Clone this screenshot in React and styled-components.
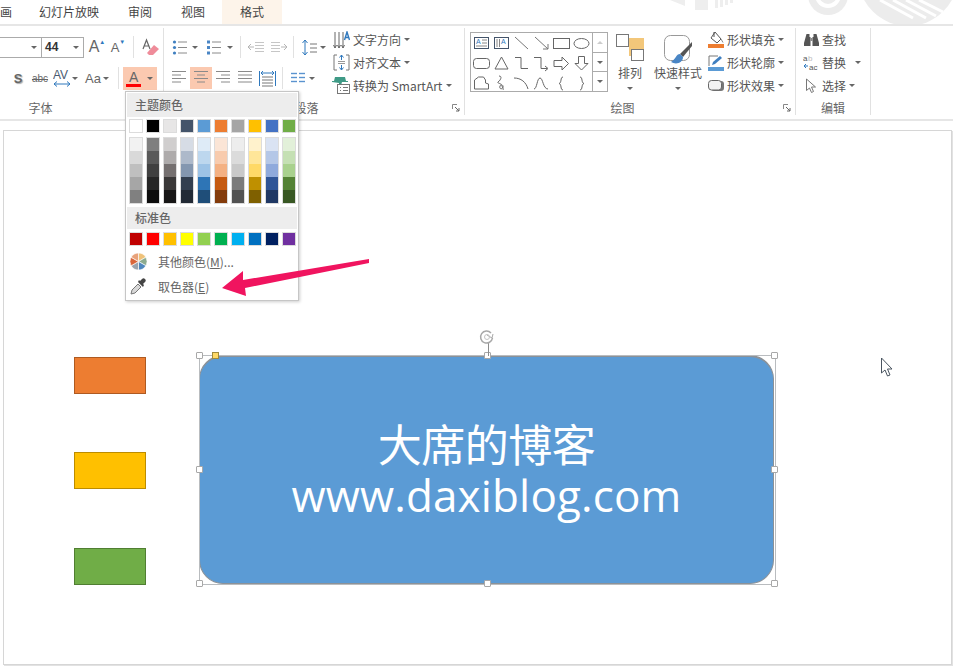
import React from "react";
import styled, { createGlobalStyle } from "styled-components";

const Reset = createGlobalStyle`
  html, body { margin: 0; padding: 0; background: #fff; }
  * { box-sizing: border-box; }
`;

const cjk = `"Noto Sans CJK SC", "Noto Sans", sans-serif`;

const Page = styled.div`
  position: relative;
  width: 953px;
  height: 667px;
  overflow: hidden;
  background: #fff;
  font-family: ${cjk};
  color: #444;
`;

/* ---------- tabs ---------- */
const TabBar = styled.div`
  position: relative;
  display: flex;
  height: 26px;
  border-bottom: 2px solid #e6e6e6;
  overflow: hidden;
`;

const Tab = styled.div`
  position: relative;
  z-index: 1;
  flex: none;
  width: ${(p) => p.$w}px;
  margin-left: ${(p) => p.$ml || 0}px;
  height: 24px;
  line-height: 24px;
  font-size: 12px;
  text-align: ${(p) => p.$align || "center"};
  background: ${(p) => (p.$active ? "#fdf4ea" : "transparent")};
  white-space: nowrap;
`;

const Watermark = styled.svg`
  position: absolute;
  top: 0;
  left: 660px;
`;

/* ---------- ribbon ---------- */
const Ribbon = styled.div`
  display: flex;
  height: 95px;
  padding: 2px 0 4px;
  border-bottom: 2px solid #e6e6e6;
`;

const Group = styled.section`
  flex: none;
  display: flex;
  flex-direction: column;
  width: ${(p) => p.$w}px;
  border-right: 1px solid #e1e1e1;
`;

const GroupBody = styled.div`
  flex: 1;
  display: flex;
  min-height: 0;
`;

const GroupFoot = styled.div`
  flex: none;
  display: flex;
  align-items: center;
  height: 16px;
  padding-right: ${(p) => p.$pr || 0}px;
  font-size: 12px;
  color: #666;
`;

const FootLabel = styled.span`
  flex: 1;
  text-align: center;
`;

const Launcher = styled.svg`
  flex: none;
  width: 8px;
  height: 8px;
  margin: 2px 4px 0 3px;
`;

const RowStack = styled.div`
  flex: none;
  width: ${(p) => p.$w}px;
  padding-top: 8px;
`;

const ToolRow = styled.div`
  display: flex;
  align-items: center;
  height: 22px;
  margin-bottom: 9px;
`;

const Tool = styled.span`
  flex: none;
  display: inline-flex;
  align-items: center;
  justify-content: center;
  width: ${(p) => p.$w}px;
  height: 22px;
  margin-left: ${(p) => p.$ml || 0}px;
  background: ${(p) => (p.$on ? "#fbc9b0" : "transparent")};
  font-family: "Liberation Sans", sans-serif;
  font-size: ${(p) => p.$fs || 12}px;
  color: #666;
`;

const StepMark = styled.span`
  align-self: flex-start;
  margin-top: 3px;
  font-size: 6px;
  color: #2f78bd;
`;

const ShadowLetter = styled(Tool)`
  font-weight: 700;
  text-shadow: 1px 1px 1px #aaa;
`;

const StruckText = styled(Tool)`
  text-decoration: line-through;
`;

const Caret = styled.i`
  flex: none;
  width: 0;
  height: 0;
  margin-left: ${(p) => p.$ml || 0}px;
  margin-right: ${(p) => p.$mr || 0}px;
  border-left: 3px solid transparent;
  border-right: 3px solid transparent;
  border-top: 3px solid ${(p) => (p.$light ? "#ccc" : "#666")};
  transform: ${(p) => (p.$up ? "rotate(180deg)" : "none")};
`;

const Divider = styled.span`
  flex: none;
  width: 1px;
  height: 22px;
  margin-left: ${(p) => p.$ml || 0}px;
  background: #e1e1e1;
`;

const ComboBox = styled.div`
  flex: none;
  display: flex;
  align-items: center;
  width: ${(p) => p.$w}px;
  height: 21px;
  border: 1px solid #ababab;
  border-left-width: ${(p) => (p.$open ? 0 : 1)}px;
  border-right-width: ${(p) => (p.$open ? 0 : 1)}px;
  padding-left: 3px;
  font-family: "Liberation Sans", sans-serif;
  font-size: 12px;
  color: #333;
`;

const ComboValue = styled.span`
  flex: 1;
  font-weight: 700;
`;

const HighlightA = styled.span`
  flex: none;
  display: flex;
  align-items: center;
  width: 34px;
  height: 23px;
  margin-left: 4px;
  background: #fbc9b0;
`;

const Stack = styled.div`
  flex: none;
  width: ${(p) => p.$w}px;
  margin-left: ${(p) => p.$ml || 0}px;
`;

const LabelRow = styled.div`
  display: flex;
  align-items: center;
  height: 23px;
  font-size: 12px;
  white-space: nowrap;
  color: #555;
`;

const RowIcon = styled.span`
  flex: none;
  display: inline-flex;
  justify-content: center;
  width: ${(p) => p.$w}px;
  margin-right: ${(p) => p.$mr || 0}px;
`;

/* gallery */
const Gallery = styled.div`
  flex: none;
  display: flex;
  width: 138px;
  height: 60px;
  margin: 4px 0 0 5px;
  border: 1px solid #ababab;
`;

const GalleryGrid = styled.div`
  display: grid;
  grid-template-columns: repeat(6, 20px);
  grid-auto-rows: 20px;
  width: 121px;
`;

const GalleryCell = styled.span`
  display: flex;
  align-items: center;
  justify-content: center;
`;

const GalleryScroll = styled.div`
  flex: none;
  display: flex;
  flex-direction: column;
  width: 15px;
  border-left: 1px solid #ababab;
`;

const ScrollBtn = styled.span`
  flex: 1;
  display: flex;
  align-items: center;
  justify-content: center;
  & + & { border-top: 1px solid #ababab; }
`;

const BigButton = styled.div`
  flex: none;
  display: flex;
  flex-direction: column;
  align-items: center;
  width: ${(p) => p.$w}px;
  margin-left: ${(p) => p.$ml || 0}px;
  padding-top: 6px;
  font-size: 12px;
  line-height: 16px;
  color: #555;
  white-space: nowrap;
`;

const BigIcon = styled.svg`
  flex: none;
  width: 28px;
  height: ${(p) => p.$h}px;
  margin-top: ${(p) => p.$mt || 0}px;
  margin-bottom: ${(p) => p.$mb || 0}px;
`;

const BigCaret = styled(Caret)`
  margin-top: 6px;
`;

/* ---------- slide ---------- */
const Workspace = styled.div`
  padding: 9px 1px 0 3px;
`;

const Slide = styled.div`
  position: relative;
  height: 535px;
  background: #fff;
  border: 1px solid #d6d6d6;
  box-shadow: 1px 1px 0 #e2e2e2;
`;

const SwatchShape = styled.div`
  position: absolute;
  left: 70px;
  top: ${(p) => p.$top}px;
  width: 72px;
  height: 37px;
  background: ${(p) => p.$fill};
  border: 1px solid ${(p) => p.$edge};
`;

const BlueShape = styled.div`
  position: absolute;
  left: 195px;
  top: 224px;
  width: 575px;
  height: 229px;
  display: flex;
  flex-direction: column;
  align-items: center;
  justify-content: center;
  background: #5b9bd5;
  border: 1px solid #8c9298;
  border-top-width: 2px;
  border-radius: 24px;
  color: #fff;
  font-family: "Open Sans", "Noto Sans CJK SC", sans-serif;
  font-size: 44px;
  line-height: 50px;
  white-space: nowrap;
`;

const ShapeLine = styled.span`
  display: block;
  letter-spacing: ${(p) => p.$ls || 0}px;
`;

const SelectionFrame = styled.div`
  position: absolute;
  left: 195px;
  top: 224px;
  width: 577px;
  height: 230px;
  border: 1px solid #b9bcbf;
  pointer-events: none;
`;

const Handle = styled.span`
  position: absolute;
  left: ${(p) => p.$x}%;
  top: ${(p) => p.$y}%;
  width: 7px;
  height: 7px;
  margin: -4px 0 0 -4px;
  background: #fff;
  border: 1px solid #a8a8a8;
  border-radius: 1px;
`;

const AdjustHandle = styled.span`
  position: absolute;
  left: 12px;
  top: -4px;
  width: 7px;
  height: 7px;
  background: #ffd966;
  border: 1px solid #a08a3c;
`;

const RotateStem = styled.span`
  position: absolute;
  left: 50%;
  top: -13px;
  width: 1px;
  height: 13px;
  background: #8c8c8c;
`;

const RotateIcon = styled.svg`
  position: absolute;
  left: calc(50% - 9px);
  top: -27px;
`;

const PointerIcon = styled.svg`
  position: absolute;
  left: 876px;
  top: 226px;
`;

/* ---------- colour menu ---------- */
const Menu = styled.div`
  position: absolute;
  left: 125px;
  top: 91px;
  width: 174px;
  height: 210px;
  padding: 1px;
  background: #fff;
  border: 1px solid #c6c6c6;
  box-shadow: 1px 1px 3px rgba(0, 0, 0, 0.2);
`;

const MenuHead = styled.div`
  height: ${(p) => p.$h}px;
  line-height: ${(p) => p.$h}px;
  padding-left: 8px;
  background: #ededed;
  font-size: 12px;
  font-weight: 500;
  color: #666;
`;

const SwatchRow = styled.div`
  display: flex;
  gap: 5px;
  padding: ${(p) => p.$pad || "3px 0 0 3px"};
`;

const Swatch = styled.span`
  flex: none;
  width: 12px;
  height: 12px;
  background: ${(p) => p.$c};
  box-shadow: 0 0 0 1px #dcdcdc;
`;

const ShadeRow = styled.div`
  display: flex;
  gap: 5px;
  padding: 6px 0 4px 3px;
`;

const ShadeColumn = styled.div`
  flex: none;
  display: flex;
  flex-direction: column;
  width: 12px;
  box-shadow: 0 0 0 1px #dcdcdc;
`;

const Shade = styled.span`
  height: 13px;
  background: ${(p) => p.$c};
`;

const MenuItem = styled.div`
  display: flex;
  align-items: center;
  height: 25px;
  padding-left: 3px;
  font-size: 12px;
  color: #666;
  white-space: nowrap;
`;

const MenuIcon = styled.span`
  flex: none;
  display: inline-flex;
  width: 17px;
  margin-right: 11px;
`;

const Key = styled.span`
  text-decoration: underline;
`;

const Callout = styled.svg`
  position: absolute;
  left: 0;
  top: 0;
  pointer-events: none;
`;

/* ---------- small drawings ---------- */
const Lines = ({ rows, w = 14, c = "#8a8a8a", gap = 4 }) => (
  <svg width={w} height={rows.length * gap + 2}>
    {rows.map(([a, b], i) => (
      <line key={i} x1={a} x2={b} y1={i * gap + 1.5} y2={i * gap + 1.5} stroke={c} strokeWidth="1" />
    ))}
  </svg>
);

const Bullets = ({ numbered }) => (
  <svg width="15" height="15">
    {[2, 7.5, 13].map((y) => (
      <g key={y}>
        {numbered ? (
          <rect x="1" y={y - 1.5} width="3" height="3" fill="#4a86c5" />
        ) : (
          <circle cx="2.5" cy={y} r="1.6" fill="#3f7fc0" />
        )}
        <line x1="6" x2="15" y1={y} y2={y} stroke="#8a8a8a" />
      </g>
    ))}
  </svg>
);

const Indent = ({ dir }) => (
  <svg width="16" height="12">
    {[1.5, 4.5, 7.5, 10.5].map((y) => (
      <line key={y} x1={dir ? 0 : 7} x2={dir ? 9 : 16} y1={y} y2={y} stroke="#c6c6c6" />
    ))}
    <path d={dir ? "M10 6h6M13 3l3 3-3 3" : "M0 6h6M3 3L0 6l3 3"} stroke="#b5b5b5" fill="none" />
  </svg>
);

const LineSpacing = () => (
  <svg width="15" height="17">
    <path d="M3 1v15M0.5 4L3 1l2.5 3M0.5 13L3 16l2.5-3" stroke="#2f78bd" fill="none" />
    {[5, 9, 13].map((y) => (
      <line key={y} x1="8" x2="15" y1={y} y2={y} stroke="#777" />
    ))}
  </svg>
);

const Distribute = () => (
  <svg width="17" height="17">
    <path d="M.5 1v15M16.5 1v15" stroke="#2f78bd" />
    <path d="M2 3h13M2 3l2-2M2 3l2 2M15 3l-2-2M15 3l-2 2" stroke="#2f78bd" fill="none" />
    {[7, 10, 13, 16].map((y) => (
      <line key={y} x1="3" x2="14" y1={y} y2={y} stroke="#777" />
    ))}
  </svg>
);

const Columns = () => (
  <svg width="14" height="12">
    {[1.5, 5.5, 9.5].map((y) => (
      <g key={y}>
        <line x1="0" x2="6" y1={y} y2={y} stroke="#5a93cf" strokeWidth="1.4" />
        <line x1="8" x2="14" y1={y} y2={y} stroke="#5a93cf" strokeWidth="1.4" />
      </g>
    ))}
  </svg>
);

const Eraser = () => (
  <svg width="17" height="18">
    <path d="M7 17l-2-2 7-8 5 4-6 6z" fill="#ef8c9a" />
    <path d="M1 11L4.5 2 8 11M2.5 8h4" stroke="#666" fill="none" strokeWidth="1.2" />
  </svg>
);

const Kerning = () => (
  <svg width="18" height="20">
    <text x="0" y="11" fontSize="12" fontFamily="Liberation Sans, sans-serif" fill="#4a5a70">AV</text>
    <path d="M1 16h16M1 16l3-2.500M1 16l3 2.500M17 16l-3-2.500M17 16l-3 2.500" stroke="#2f78bd" fill="none" />
  </svg>
);

const TextDir = () => (
  <svg width="17" height="18">
    <path d="M2 1v16M6 1v16M10 1v16" stroke="#666" fill="none" />
    <path d="M0.5 14L2 17l1.5-3M4.5 14L6 17l1.5-3M8.5 14l1.5 3 1.5-3" stroke="#666" fill="none" />
    <path d="M11.5 9l2.5-8 2.5 8M12.5 6.5h3" stroke="#2f78bd" fill="none" strokeWidth="1.4" />
  </svg>
);

const AlignText = () => (
  <svg width="17" height="17">
    <path d="M4 1H1v15h3M13 1h3v15h-3" stroke="#777" fill="none" />
    <path d="M8.5 1v5M8.5 11v5M6.5 3.5l2-2.5 2 2.5M6.5 13.5l2 2.5 2-2.5" stroke="#2f78bd" fill="none" />
    <path d="M5 7.5h7M5 9.5h7" stroke="#999" />
  </svg>
);

const SmartArt = () => (
  <svg width="18" height="17">
    <path d="M0 4h2l1-4h10l1 4h2v1H10L8 12H7V6L0 5z" fill="#3f9a86" />
    <rect x="5.5" y="7.5" width="12" height="9" fill="#fff" stroke="#777" />
    <path d="M8 10.5h1M8 13.5h1M11 10.5h5M11 13.5h5" stroke="#777" />
  </svg>
);

const FillBucket = () => (
  <svg width="16" height="16">
    <path d="M7 0l6 7-4 4-6-5z" fill="#fff" stroke="#555" />
    <path d="M6 0v5" stroke="#555" />
    <path d="M13 7l2 3.500" stroke="#888" />
    <rect x="0" y="12" width="16" height="4" fill="#ed7d31" />
  </svg>
);

const OutlinePen = () => (
  <svg width="16" height="16">
    <path d="M1 11V1h9" stroke="#777" fill="none" />
    <path d="M4 10l1-3 7-6 2 2-7 6z" fill="#3f7fc0" />
    <rect x="0" y="12" width="16" height="4" fill="#5b9bd5" />
  </svg>
);

const ShapeEffect = () => (
  <svg width="16" height="14">
    <rect x="3" y="2" width="13" height="10" rx="3" fill="#777" />
    <rect x="0.500" y="1.500" width="13" height="9.500" rx="3" fill="#f2f2f2" stroke="#666" />
  </svg>
);

const Binoculars = () => (
  <svg width="15" height="14">
    <path d="M2.500 1h3v3h1v9H0v-3z" fill="#555" />
    <path d="M12.500 1h-3v3h-1v9H15v-3z" fill="#555" />
    <rect x="6.500" y="5" width="2" height="3" fill="#888" />
  </svg>
);

const ReplaceIcon = () => (
  <svg width="17" height="17">
    <text x="0" y="7" fontFamily="Liberation Sans, sans-serif" fontSize="8" fill="#555">a</text>
    <text x="5" y="7" fontFamily="Liberation Sans, sans-serif" fontSize="8" fill="#bbb">b</text>
    <text x="6" y="16" fontFamily="Liberation Sans, sans-serif" fontSize="8" fill="#555">ac</text>
    <path d="M1 12h4M1 12l2-2M1 12l2 2" stroke="#2f78bd" fill="none" />
  </svg>
);

const SelectIcon = () => (
  <svg width="12" height="16">
    <path d="M1.5 1v11.5l3-2.5 2 4.5 2-1-2-4.5h4z" fill="#fff" stroke="#777" />
  </svg>
);

const Dropper = () => (
  <svg width="17" height="17">
    <path d="M1 16l1-4 6-6 3 3-6 6z" fill="#d8d8d8" stroke="#777" />
    <path d="M8 4l5 5 1-2-1-1 2-2a2 2 0 0 0-3-3l-2 2-1-1z" fill="#444" />
  </svg>
);

const Wheel = () => (
  <svg width="17" height="17" viewBox="0 0 16 16">
    <g stroke="#fff" strokeWidth="0.6">
      <path d="M8 8V0a8 8 0 0 1 6.900 4z" fill="#efc27a" />
      <path d="M8 8l6.900-4a8 8 0 0 1 0 8z" fill="#8cab8e" />
      <path d="M8 8l6.900 4A8 8 0 0 1 8 16z" fill="#4f87bd" />
      <path d="M8 8v8a8 8 0 0 1-6.900-4z" fill="#9aa3ad" />
      <path d="M8 8l-6.900 4a8 8 0 0 1 0-8z" fill="#d9653a" />
      <path d="M8 8L1.100 4A8 8 0 0 1 8 0z" fill="#e8a27a" />
    </g>
  </svg>
);

const gallery = [
  <g><rect x="1.5" y="2.5" width="14" height="11" stroke="#44546a" fill="#fff" /><text x="3" y="9" fontSize="7" fill="#2f78bd" fontFamily="Liberation Sans, sans-serif">A</text><path d="M9 5h5M9 8h5M3 11h11" stroke="#888" /></g>,
  <g><rect x="1.5" y="2.5" width="14" height="11" stroke="#44546a" fill="#fff" /><text x="8" y="9" fontSize="7" fill="#2f78bd" fontFamily="Liberation Sans, sans-serif">A</text><path d="M4 4v8M6.500 4v8" stroke="#888" /></g>,
  <path d="M2 2l13 12" stroke="#777" />,
  <path d="M2 2l13 12M10 14h5V9" stroke="#777" fill="none" />,
  <rect x="0.5" y="3.500" width="16" height="10" stroke="#666" fill="none" />,
  <ellipse cx="8.500" cy="8.500" rx="7.500" ry="5" stroke="#666" fill="none" />,
  <rect x="0.5" y="3.500" width="16" height="10" rx="3" stroke="#666" fill="none" />,
  <path d="M8.500 2L15 14H2z" stroke="#666" fill="none" />,
  <path d="M2 2.500h6v11h7" stroke="#666" fill="none" />,
  <path d="M1 2.500h7v11h6M12 11l3 2.500-3 2.500" stroke="#666" fill="none" />,
  <path d="M1 5.500h8V2l6.500 6.500L9 15v-3.500H1z" stroke="#666" fill="none" />,
  <path d="M5.500 1.500h6v7H15L8.500 15 2 8.500h3.500z" stroke="#666" fill="none" />,
  <path d="M1.500 5l4-3h5l2 3v3l3 1v5h-14z" stroke="#666" fill="none" />,
  <path d="M6 1c4 0 1 5-1 6s6 2 5 5-4 2-3-1 4 3 3 4" stroke="#666" fill="none" />,
  <path d="M1 3c7 0 12 4 14 11" stroke="#666" fill="none" />,
  <path d="M1 14c3 0 3-11 6-11s3 11 8 11" stroke="#666" fill="none" />,
  <path d="M10 2C7 2 9 8 6 8.500c3 .5 1 6.500 4 6.500" stroke="#666" fill="none" />,
  <path d="M7 2c3 0 1 6 4 6.500-3 .5-1 6.500-4 6.500" stroke="#666" fill="none" />,
];

const theme = ["#ffffff", "#000000", "#e7e6e6", "#44546a", "#5b9bd5", "#ed7d31", "#a5a5a5", "#ffc000", "#4472c4", "#70ad47"];

const shades = [
  ["#f2f2f2", "#d9d9d9", "#bfbfbf", "#a6a6a6", "#808080"],
  ["#7f7f7f", "#595959", "#404040", "#262626", "#0d0d0d"],
  ["#d0cece", "#aeabab", "#757070", "#3a3838", "#171616"],
  ["#d6dce5", "#adb9ca", "#8497b0", "#333f50", "#222a35"],
  ["#deebf7", "#bdd7ee", "#9dc3e6", "#2e75b6", "#1f4e79"],
  ["#fbe5d6", "#f8cbad", "#f4b183", "#c55a11", "#843c0c"],
  ["#ededed", "#dbdbdb", "#c9c9c9", "#7b7b7b", "#525252"],
  ["#fff2cc", "#ffe699", "#ffd966", "#bf9000", "#7f6000"],
  ["#dae3f3", "#b4c7e7", "#8faadc", "#2f5597", "#203864"],
  ["#e2f0d9", "#c5e0b4", "#a9d18e", "#548235", "#385723"],
];

const standard = ["#c00000", "#ff0000", "#ffc000", "#ffff00", "#92d050", "#00b050", "#00b0f0", "#0070c0", "#002060", "#7030a0"];

const handles = [
  [0, 0], [50, 0], [100, 0],
  [0, 50], [100, 50],
  [0, 100], [50, 100], [100, 100],
];

const LauncherMark = () => (
  <Launcher viewBox="0 0 8 8">
    <path d="M.5 5V.5H5" stroke="#888" fill="none" />
    <path d="M3 3l4 4M7 4v3H4" stroke="#666" fill="none" />
  </Launcher>
);

const FontGroup = () => (
  <Group $w={164}>
    <GroupBody>
      <RowStack $w={163}>
        <ToolRow>
          <ComboBox $w={41} $open>
            <ComboValue />
            <Caret $mr={4} />
          </ComboBox>
          <ComboBox $w={43}>
            <ComboValue>44</ComboValue>
            <Caret $mr={4} />
          </ComboBox>
          <Tool $w={18} $ml={4} $fs={16}>A<StepMark>▲</StepMark></Tool>
          <Tool $w={16} $ml={4} $fs={13}>A<StepMark>▼</StepMark></Tool>
          <Divider $ml={7} />
          <Tool $w={18} $ml={7}><Eraser /></Tool>
        </ToolRow>
        <ToolRow>
          <ShadowLetter $w={10} $ml={13} $fs={13}>S</ShadowLetter>
          <StruckText $w={18} $ml={8} $fs={10}>abc</StruckText>
          <Tool $w={18} $ml={4}><Kerning /></Tool>
          <Caret $ml={1} />
          <Tool $w={18} $ml={6} $fs={13}>Aa</Tool>
          <Caret $ml={1} />
          <Divider $ml={9} />
          <HighlightA>
            <svg width="18" height="18">
              <text x="6" y="13" fontSize="14" fontFamily="Liberation Sans, sans-serif" fill="#666">A</text>
              <rect x="3" y="15" width="15" height="3" fill="#f00" />
            </svg>
            <Caret $ml={6} />
          </HighlightA>
        </ToolRow>
      </RowStack>
    </GroupBody>
    <GroupFoot $pr={82}>
      <FootLabel>字体</FootLabel>
    </GroupFoot>
  </Group>
);

const ParagraphGroup = () => (
  <Group $w={301}>
    <GroupBody>
      <RowStack $w={164}>
        <ToolRow>
          <Tool $w={15} $ml={8}><Bullets /></Tool>
          <Caret $ml={5} />
          <Tool $w={15} $ml={8}><Bullets numbered /></Tool>
          <Caret $ml={6} />
          <Divider $ml={7} />
          <Tool $w={16} $ml={7}><Indent /></Tool>
          <Tool $w={16} $ml={7}><Indent dir /></Tool>
          <Divider $ml={6} />
          <Tool $w={15} $ml={8}><LineSpacing /></Tool>
          <Caret $ml={3} />
        </ToolRow>
        <ToolRow>
          <Tool $w={14} $ml={8}><Lines rows={[[0, 14], [0, 9], [0, 14], [0, 9]]} gap={3.5} /></Tool>
          <Tool $w={22} $ml={4} $on><Lines rows={[[0, 14], [3, 11], [0, 14], [3, 11]]} gap={3.5} /></Tool>
          <Tool $w={14} $ml={4}><Lines rows={[[0, 14], [5, 14], [0, 14], [5, 14]]} gap={3.5} /></Tool>
          <Tool $w={14} $ml={8}><Lines rows={[[0, 14], [0, 14], [0, 14], [0, 14]]} gap={3.5} /></Tool>
          <Tool $w={17} $ml={7}><Distribute /></Tool>
          <Divider $ml={6} />
          <Tool $w={14} $ml={8}><Columns /></Tool>
          <Caret $ml={4} />
        </ToolRow>
      </RowStack>
      <Stack $w={131} $ml={4}>
        <LabelRow><RowIcon $w={18} $mr={3}><TextDir /></RowIcon>文字方向<Caret $ml={3} /></LabelRow>
        <LabelRow><RowIcon $w={18} $mr={3}><AlignText /></RowIcon>对齐文本<Caret $ml={3} /></LabelRow>
        <LabelRow><RowIcon $w={18} $mr={3}><SmartArt /></RowIcon>转换为 SmartArt<Caret $ml={4} /></LabelRow>
      </Stack>
    </GroupBody>
    <GroupFoot>
      <FootLabel>段落</FootLabel>
      <LauncherMark />
    </GroupFoot>
  </Group>
);

const DrawGroup = () => (
  <Group $w={331}>
    <GroupBody>
      <Gallery>
        <GalleryGrid>
          {gallery.map((shape, i) => (
            <GalleryCell key={i}>
              <svg width="17" height="17">{shape}</svg>
            </GalleryCell>
          ))}
        </GalleryGrid>
        <GalleryScroll>
          <ScrollBtn><Caret $up $light /></ScrollBtn>
          <ScrollBtn><Caret /></ScrollBtn>
          <ScrollBtn><Caret /></ScrollBtn>
        </GalleryScroll>
      </Gallery>
      <BigButton $w={36} $ml={4}>
        <BigIcon $h={27} $mb={4} viewBox="0 0 28 27">
          <rect x="13" y="4" width="15" height="18" fill="#f3c77a" />
          <rect x="0.500" y="0.500" width="12" height="12" fill="#fff" stroke="#777" />
          <rect x="15.500" y="15.500" width="12" height="11" fill="#fff" stroke="#777" />
        </BigIcon>
        排列
        <BigCaret />
      </BigButton>
      <BigButton $w={48} $ml={6}>
        <BigIcon $h={29} $mt={1} $mb={1} viewBox="0 0 28 29">
          <rect x="0.500" y="0.500" width="25" height="25" rx="6" fill="#fff" stroke="#999" />
          <path d="M28 7L16 19l3 3L28 11z" fill="#555" />
          <path d="M16 19c-4 0-4 5-9 8 5 3 12 1 12-5z" fill="#4a86c5" />
        </BigIcon>
        快速样式
        <BigCaret />
      </BigButton>
      <Stack $w={80} $ml={6}>
        <LabelRow><RowIcon $w={16} $mr={3}><FillBucket /></RowIcon>形状填充<Caret $ml={3} /></LabelRow>
        <LabelRow><RowIcon $w={16} $mr={3}><OutlinePen /></RowIcon>形状轮廓<Caret $ml={3} /></LabelRow>
        <LabelRow><RowIcon $w={16} $mr={3}><ShapeEffect /></RowIcon>形状效果<Caret $ml={3} /></LabelRow>
      </Stack>
    </GroupBody>
    <GroupFoot>
      <FootLabel>绘图</FootLabel>
      <LauncherMark />
    </GroupFoot>
  </Group>
);

const EditGroup = () => (
  <Group $w={75}>
    <GroupBody>
      <Stack $w={70} $ml={7}>
        <LabelRow><RowIcon $w={16} $mr={3}><Binoculars /></RowIcon>查找</LabelRow>
        <LabelRow><RowIcon $w={16} $mr={3}><ReplaceIcon /></RowIcon>替换<Caret $ml={9} /></LabelRow>
        <LabelRow><RowIcon $w={16} $mr={3}><SelectIcon /></RowIcon>选择<Caret $ml={3} /></LabelRow>
      </Stack>
    </GroupBody>
    <GroupFoot>
      <FootLabel>编辑</FootLabel>
    </GroupFoot>
  </Group>
);

const ColorMenu = () => (
  <Menu>
    <MenuHead $h={24}>主题颜色</MenuHead>
    <SwatchRow>
      {theme.map((c) => <Swatch key={c} $c={c} />)}
    </SwatchRow>
    <ShadeRow>
      {shades.map((col, i) => (
        <ShadeColumn key={i}>
          {col.map((c) => <Shade key={c} $c={c} />)}
        </ShadeColumn>
      ))}
    </ShadeRow>
    <MenuHead $h={22}>标准色</MenuHead>
    <SwatchRow $pad="4px 0 4px 3px">
      {standard.map((c) => <Swatch key={c} $c={c} />)}
    </SwatchRow>
    <MenuItem>
      <MenuIcon><Wheel /></MenuIcon>
      其他颜色(<Key>M</Key>)...
    </MenuItem>
    <MenuItem>
      <MenuIcon><Dropper /></MenuIcon>
      取色器(<Key>E</Key>)
    </MenuItem>
  </Menu>
);

export default function App() {
  return (
    <Page>
      <Reset />
      <TabBar>
        <Watermark width="293" height="24" viewBox="0 0 293 24">
          <path d="M10 0l15 6V0zM35 0h13v10H35zM55 0h3v8h-3zM60 0h3v7h-3zM65 0h3v5h-3zM70 0h3v3h-3z" fill="#eeeeee" />
          <circle cx="168" cy="-5" r="20" fill="#ececec" />
          <circle cx="168" cy="-5" r="13" fill="#fff" />
          <circle cx="168" cy="-5" r="9" fill="#ececec" />
          <circle cx="248" cy="-24" r="50" fill="#ececec" />
          <path d="M220 0l33 18M233 0l33 18M246 0l30 16M259 0l24 12" stroke="#fff" strokeWidth="3" />
        </Watermark>
        <Tab $w={9} $align="right">画</Tab>
        <Tab $w={62} $ml={29}>幻灯片放映</Tab>
        <Tab $w={26} $ml={27}>审阅</Tab>
        <Tab $w={26} $ml={27}>视图</Tab>
        <Tab $w={60} $ml={16} $active>格式</Tab>
      </TabBar>
      <Ribbon>
        <FontGroup />
        <ParagraphGroup />
        <DrawGroup />
        <EditGroup />
      </Ribbon>
      <Workspace>
        <Slide>
          <SwatchShape $top={226} $fill="#ed7d31" $edge="#ae5a21" />
          <SwatchShape $top={321} $fill="#ffc000" $edge="#bc8c00" />
          <SwatchShape $top={417} $fill="#70ad47" $edge="#507e32" />
          <BlueShape>
            <ShapeLine $ls={-0.5}>大席的博客</ShapeLine>
            <ShapeLine $ls={0.15}>www.daxiblog.com</ShapeLine>
          </BlueShape>
          <SelectionFrame>
            {handles.map(([x, y]) => <Handle key={`${x}-${y}`} $x={x} $y={y} />)}
            <AdjustHandle />
            <RotateStem />
            <RotateIcon width="16" height="16" viewBox="0 0 16 16">
              <path d="M12 4a6 6 0 1 0 1.500 5" stroke="#a8a8a8" strokeWidth="1.500" fill="none" />
              <path d="M8 6l5 3 1-4" stroke="#a8a8a8" fill="none" />
              <circle cx="8" cy="8" r="2.500" stroke="#c4c4c4" fill="none" />
            </RotateIcon>
          </SelectionFrame>
          <PointerIcon width="14" height="20" viewBox="0 0 14 20">
            <path d="M1.500 1v15l3.500-3 2.500 6 2.500-1-2.500-6H12z" fill="#fff" stroke="#4a5560" />
          </PointerIcon>
        </Slide>
      </Workspace>
      <ColorMenu />
      <Callout width="953" height="667" viewBox="0 0 953 667">
        <path d="M369 259L243 280l0-9-21 17 24 8-1-8 124-25z" fill="#f0145f" />
      </Callout>
    </Page>
  );
}
